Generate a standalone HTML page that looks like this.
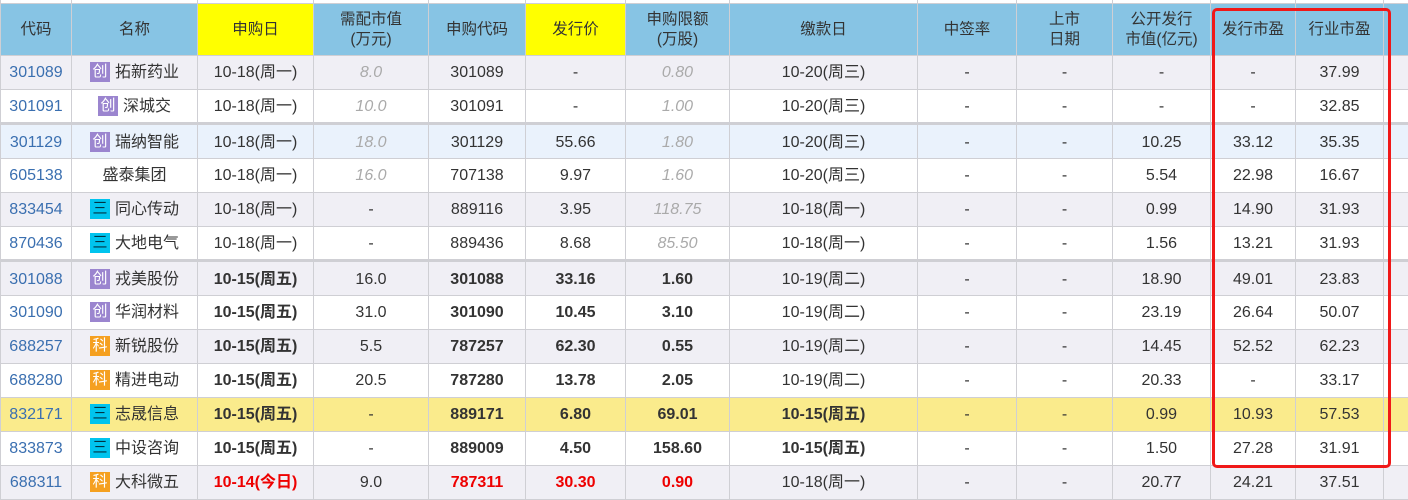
<!DOCTYPE html><html><head><meta charset="utf-8"><style>
body{margin:0;width:1408px;height:477px;overflow:hidden;background:#fff;font-family:"Liberation Sans","Noto Sans CJK SC",sans-serif;position:relative}
table{position:absolute;left:0;top:-31px;border-collapse:collapse;table-layout:fixed;width:1408px}
td,th{border:1px solid #cfcfd4;text-align:center;font-size:16px;color:#333;padding:0;white-space:nowrap;overflow:hidden;line-height:18px}
th{background:#87c4e4;font-weight:normal;height:51px;color:#333;line-height:20px;font-size:15.5px}
th.y{background:#ffff00}
tr.r td{height:34px;padding-top:1px;box-sizing:border-box}
tr.g td{background:#f0eff5}
tr.b td{background:#eaf2fc}
tr.yl td{background:#faeb8c}
tr.sep td{border-top:3px solid #cfcfd4;height:35px;padding-top:2px}
td.c{color:#3a6fb0}
.i{color:#aaa;font-style:italic}
.bd{font-weight:bold}
.k{display:inline-block;width:20px;height:20px;line-height:20px;font-size:15px;color:#fff;vertical-align:middle;margin-right:5px;position:relative;top:-1px}
.cy{background:#9b85cf}.ke{background:#f5a020}.sa{background:#00c4ee;color:#034}
.red{color:#e00;font-weight:bold}
#box{position:absolute;left:1212px;top:8px;width:173px;height:454px;border:3px solid #f01818;border-radius:5px}
</style></head><body>
<table>
<colgroup><col style="width:71px"><col style="width:126px"><col style="width:116px"><col style="width:115px"><col style="width:97px"><col style="width:100px"><col style="width:104px"><col style="width:188px"><col style="width:99px"><col style="width:96px"><col style="width:98px"><col style="width:85px"><col style="width:88px"><col style="width:25px"></colgroup>
<tr class="r"><td></td><td></td><td></td><td></td><td></td><td></td><td></td><td></td><td></td><td></td><td></td><td></td><td></td><td></td></tr>
<tr><th>代码</th><th>名称</th><th class="y">申购日</th><th>需配市值<br>(万元)</th><th>申购代码</th><th class="y">发行价</th><th>申购限额<br>(万股)</th><th>缴款日</th><th>中签率</th><th>上市<br>日期</th><th>公开发行<br>市值(亿元)</th><th>发行市盈</th><th>行业市盈</th><th></th></tr>
<tr class="r g"><td class="c">301089</td><td><span class="k cy">创</span>拓新药业</td><td>10-18(周一)</td><td class="i">8.0</td><td>301089</td><td>-</td><td class="i">0.80</td><td>10-20(周三)</td><td>-</td><td>-</td><td>-</td><td>-</td><td>37.99</td><td></td></tr>
<tr class="r"><td class="c">301091</td><td><span class="k cy">创</span>深城交</td><td>10-18(周一)</td><td class="i">10.0</td><td>301091</td><td>-</td><td class="i">1.00</td><td>10-20(周三)</td><td>-</td><td>-</td><td>-</td><td>-</td><td>32.85</td><td></td></tr>
<tr class="r b sep"><td class="c">301129</td><td><span class="k cy">创</span>瑞纳智能</td><td>10-18(周一)</td><td class="i">18.0</td><td>301129</td><td>55.66</td><td class="i">1.80</td><td>10-20(周三)</td><td>-</td><td>-</td><td>10.25</td><td>33.12</td><td>35.35</td><td></td></tr>
<tr class="r"><td class="c">605138</td><td>盛泰集团</td><td>10-18(周一)</td><td class="i">16.0</td><td>707138</td><td>9.97</td><td class="i">1.60</td><td>10-20(周三)</td><td>-</td><td>-</td><td>5.54</td><td>22.98</td><td>16.67</td><td></td></tr>
<tr class="r g"><td class="c">833454</td><td><span class="k sa">三</span>同心传动</td><td>10-18(周一)</td><td>-</td><td>889116</td><td>3.95</td><td class="i">118.75</td><td>10-18(周一)</td><td>-</td><td>-</td><td>0.99</td><td>14.90</td><td>31.93</td><td></td></tr>
<tr class="r"><td class="c">870436</td><td><span class="k sa">三</span>大地电气</td><td>10-18(周一)</td><td>-</td><td>889436</td><td>8.68</td><td class="i">85.50</td><td>10-18(周一)</td><td>-</td><td>-</td><td>1.56</td><td>13.21</td><td>31.93</td><td></td></tr>
<tr class="r g sep"><td class="c">301088</td><td><span class="k cy">创</span>戎美股份</td><td class="bd">10-15(周五)</td><td>16.0</td><td class="bd">301088</td><td class="bd">33.16</td><td class="bd">1.60</td><td>10-19(周二)</td><td>-</td><td>-</td><td>18.90</td><td>49.01</td><td>23.83</td><td></td></tr>
<tr class="r"><td class="c">301090</td><td><span class="k cy">创</span>华润材料</td><td class="bd">10-15(周五)</td><td>31.0</td><td class="bd">301090</td><td class="bd">10.45</td><td class="bd">3.10</td><td>10-19(周二)</td><td>-</td><td>-</td><td>23.19</td><td>26.64</td><td>50.07</td><td></td></tr>
<tr class="r g"><td class="c">688257</td><td><span class="k ke">科</span>新锐股份</td><td class="bd">10-15(周五)</td><td>5.5</td><td class="bd">787257</td><td class="bd">62.30</td><td class="bd">0.55</td><td>10-19(周二)</td><td>-</td><td>-</td><td>14.45</td><td>52.52</td><td>62.23</td><td></td></tr>
<tr class="r"><td class="c">688280</td><td><span class="k ke">科</span>精进电动</td><td class="bd">10-15(周五)</td><td>20.5</td><td class="bd">787280</td><td class="bd">13.78</td><td class="bd">2.05</td><td>10-19(周二)</td><td>-</td><td>-</td><td>20.33</td><td>-</td><td>33.17</td><td></td></tr>
<tr class="r yl"><td class="c">832171</td><td><span class="k sa">三</span>志晟信息</td><td class="bd">10-15(周五)</td><td>-</td><td class="bd">889171</td><td class="bd">6.80</td><td class="bd">69.01</td><td class="bd">10-15(周五)</td><td>-</td><td>-</td><td>0.99</td><td>10.93</td><td>57.53</td><td></td></tr>
<tr class="r"><td class="c">833873</td><td><span class="k sa">三</span>中设咨询</td><td class="bd">10-15(周五)</td><td>-</td><td class="bd">889009</td><td class="bd">4.50</td><td class="bd">158.60</td><td class="bd">10-15(周五)</td><td>-</td><td>-</td><td>1.50</td><td>27.28</td><td>31.91</td><td></td></tr>
<tr class="r g"><td class="c">688311</td><td><span class="k ke">科</span>大科微五</td><td class="red">10-14(今日)</td><td>9.0</td><td class="red">787311</td><td class="red">30.30</td><td class="red">0.90</td><td>10-18(周一)</td><td>-</td><td>-</td><td>20.77</td><td>24.21</td><td>37.51</td><td></td></tr>
</table>
<div id="box"></div>
</body></html>
